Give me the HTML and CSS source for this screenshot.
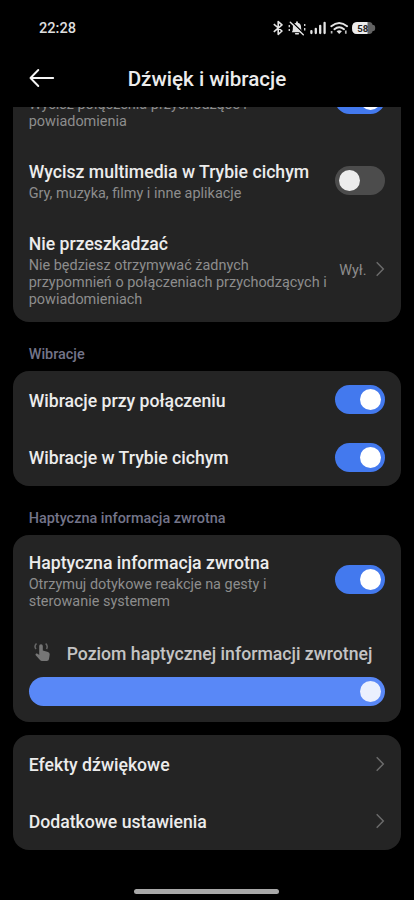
FILE: index.html
```html
<!DOCTYPE html>
<html lang="pl">
<head>
<meta charset="utf-8">
<meta name="viewport" content="width=device-width, initial-scale=1">
<title>Dźwięk i wibracje</title>
<link rel="stylesheet" href="styles.css">
</head>
<body>
<div class="status">
  <time class="clock">22:28</time>
  <svg class="status-icons" width="104" height="18" viewBox="0 0 104 18" fill="none">
    <path d="M1.8 5.2 L10 12 L6.2 15.3 V2.6 L10 5.9 L1.8 12.8" stroke="#e4e4e4" stroke-width="1.6" stroke-linejoin="round"/>
    <path d="M19.8 13.2 C21.4 11.5 20.6 8.5 21 6.8 C21.5 4.6 23 3.8 25 3.8 C27 3.8 28.5 4.8 28.9 6.8 C29.3 8.7 28.8 11.5 30.2 13.2 Z" fill="#e4e4e4"/>
    <path d="M23.7 14.7 H26.3" stroke="#e4e4e4" stroke-width="1.6" stroke-linecap="round"/>
    <path d="M25 2.4 V4.5" stroke="#e4e4e4" stroke-width="1.8"/>
    <path d="M17.3 6 V8.3 M17.3 10 V12 M32.7 5 V7 M32.7 9 V11.5" stroke="#d0d0d0" stroke-width="1.4"/>
    <path d="M19.9 3 L32.5 15.2" stroke="#000" stroke-width="1.6"/>
    <path d="M18.3 3.2 L31.3 15.8" stroke="#e4e4e4" stroke-width="1.4" stroke-linecap="round"/>
    <path d="M39.4 12.1 V14 M43.8 9.8 V14 M48.2 6.8 V14 M52.6 3.8 V14" stroke="#e4e4e4" stroke-width="2.3" stroke-linecap="round"/>
    <path d="M59.3 7.2 Q67.2 .6 75.1 7.2 M62.4 10.2 Q67.2 6.1 72 10.2" stroke="#e4e4e4" stroke-width="1.9" stroke-linecap="round"/>
    <path d="M64.6 12.2 Q67.2 10.3 69.9 12.2 L67.2 15 Z" fill="#e4e4e4"/>
    <path d="M59.6 12 V14.6 M73.8 11.5 V14.8" stroke="#bcbcbc" stroke-width="1.7"/>
    <path d="M85 3 H97.2 Q100 3 100.7 6 H101.5 Q103.2 6 103.2 9 Q103.2 12 101.5 12 H100.7 Q100 15 97.2 15 H85 Q80 15 80 9 Q80 3 85 3Z" fill="#626262"/>
    <path d="M85 3 H95.5 V15 H85 Q80 15 80 9 Q80 3 85 3Z" fill="#ededed"/>
    <text class="battery-text" x="90.8" y="12.5" text-anchor="middle">58</text>
  </svg>
</div>
<header class="header">
  <svg class="back" width="26" height="20" viewBox="0 0 26 20" fill="none" stroke="#f4f4f4" stroke-width="1.9" stroke-linecap="round" stroke-linejoin="round"><path d="M24.2 10 H1.5 M9.3 2 L1.5 10 L9.3 18"/></svg>
  <h1>Dźwięk i wibracje</h1>
</header>
<main class="content">
  <section class="card card-scrolled">
    <div class="row row-silent">
      <div class="text"><p>Wycisz połączenia przychodzące i<br>powiadomienia</p></div>
      <div class="switch on"></div>
    </div>
    <div class="row row-media">
      <div class="text"><h3>Wycisz multimedia w Trybie cichym</h3><p>Gry, muzyka, filmy i inne aplikacje</p></div>
      <div class="switch"></div>
    </div>
    <div class="row row-dnd">
      <div class="text"><h3>Nie przeszkadzać</h3><p>Nie będziesz otrzymywać żadnych<br>przypomnień o połączeniach przychodzących i<br>powiadomieniach</p></div>
      <span class="value">Wył.</span>
      <svg class="chevron" width="10" height="16" viewBox="0 0 10 16"><path d="M1.7 1.3 L8.3 8 L1.7 14.7"/></svg>
    </div>
  </section>
  <h2>Wibracje</h2>
  <section class="card">
    <div class="row"><h3>Wibracje przy połączeniu</h3><div class="switch on"></div></div>
    <div class="row"><h3>Wibracje w Trybie cichym</h3><div class="switch on"></div></div>
  </section>
  <h2>Haptyczna informacja zwrotna</h2>
  <section class="card card-haptic">
    <div class="row row-haptic">
      <div class="text"><h3>Haptyczna informacja zwrotna</h3><p>Otrzymuj dotykowe reakcje na gesty i<br>sterowanie systemem</p></div>
      <div class="switch on"></div>
    </div>
    <div class="level">
      <svg width="18" height="20" viewBox="0 0 18 20" fill="none">
        <path d="M5.2 13 V4 Q5.2 2.2 7 2.2 Q8.8 2.2 8.8 4 V8.6 L14 10 Q15.9 10.6 15.7 12.5 L15 17 Q14.7 19 12.8 19 H7.9 Q6.8 19 6 18 L1.7 13.3 Q1 12.2 2.1 11.6 Q3.2 11.2 4 11.9 Z" fill="#767676"/>
        <path d="M2.5 1.5 Q-.2 4.2 2 7 M11.7 1.5 Q14.2 4.2 12.5 7" stroke="#676767" stroke-width="1.5"/>
      </svg>
      <span>Poziom haptycznej informacji zwrotnej</span>
    </div>
    <div class="slider"></div>
  </section>
  <section class="card card-last">
    <div class="row"><h3>Efekty dźwiękowe</h3><svg class="chevron" width="10" height="16" viewBox="0 0 10 16"><path d="M1.7 1.3 L8.3 8 L1.7 14.7"/></svg></div>
    <div class="row"><h3>Dodatkowe ustawienia</h3><svg class="chevron" width="10" height="16" viewBox="0 0 10 16"><path d="M1.7 1.3 L8.3 8 L1.7 14.7"/></svg></div>
  </section>
</main>
<div class="home"></div>
</body>
</html>
```
FILE: styles.css
```css
* { box-sizing: border-box; }
body {
  margin: 0;
  width: 414px;
  height: 900px;
  overflow: hidden;
  background: #000;
  color: #ececec;
  font-family: Roboto, "Liberation Sans", sans-serif;
  display: flex;
  flex-direction: column;
}
h1, h2, h3, p { margin: 0; font-weight: 500; }
.status {
  height: 56px;
  padding: 0 38px 0 39px;
  display: flex;
  align-items: center;
  justify-content: space-between;
}
.clock { font-size: 14.6px; font-weight: 500; color: #dedede; padding-bottom: 1px; }
.battery-text { font-size: 9.6px; font-weight: 700; fill: #222; }
.header {
  height: 51px;
  display: grid;
  grid-template-columns: 54px 1fr 54px;
  align-items: center;
  padding-bottom: 5px;
}
.back { margin-left: 29px; margin-top: -2px; }
h1 { font-size: 20.6px; line-height: 24px; text-align: center; white-space: nowrap; }
.content {
  height: 769px;
  overflow: hidden;
  padding: 0 13px;
}
.card {
  background: #242424;
  border-radius: 16px;
  padding: 0 16px 0 15.7px;
}
.card-scrolled { margin-top: -52px; }
.row {
  height: 57.5px;
  display: flex;
  align-items: center;
}
.text { flex: 1; min-width: 0; padding-top: 3px; }
.row-silent { height: 89px; }
.row-silent .text { padding-top: 25px; }
.row-media { height: 72px; }
.row-dnd { height: 106px; }
.row-haptic { height: 89px; }
h3 { flex: 1; font-size: 17.65px; line-height: 21px; white-space: nowrap; }
.row > h3 { padding-top: 3px; }
p { font-size: 14.45px; line-height: 17px; font-weight: 400; color: #8d8d8d; margin-top: 2px; white-space: nowrap; }
.switch {
  flex: none;
  width: 50.5px;
  height: 29px;
  border-radius: 15px;
  background: #4c4c4c;
  padding: 4px;
  display: flex;
  align-items: center;
}
.switch::after {
  content: "";
  width: 21px;
  height: 21px;
  border-radius: 50%;
  background: #ececec;
}
.switch.on { background: #4379ee; justify-content: flex-end; }
.switch.on::after { background: #fff; }
.value { font-size: 14.45px; color: #8d8d8d; margin-right: 8.5px; padding-top: 2px; }
.chevron { flex: none; fill: none; stroke: #6b6b6b; stroke-width: 1.5; }
h2 {
  height: 49px;
  padding: 10px 15.7px 0;
  font-size: 14.45px;
  line-height: 46px;
  color: #737489;
}
.card-haptic { height: 187px; }
.level {
  height: 57px;
  padding-left: 5px;
  display: flex;
  align-items: center;
  font-size: 17.65px;
  font-weight: 500;
  color: #c4c4c4;
}
.level svg { margin-top: -2px; }
.level span { margin-left: 15px; padding-top: 2px; white-space: nowrap; }
.slider {
  height: 29px;
  margin-top: -4px;
  border-radius: 15px;
  background: #5988f7;
  padding: 4px;
  display: flex;
  justify-content: flex-end;
}
.slider::after {
  content: "";
  width: 21px;
  height: 21px;
  border-radius: 50%;
  background: #ebf0fe;
}
.card-last { margin-top: 13px; }
.home {
  width: 145px;
  height: 5px;
  border-radius: 3px;
  background: #a8a8a8;
  margin: 13px 0 0 134px;
}
```
